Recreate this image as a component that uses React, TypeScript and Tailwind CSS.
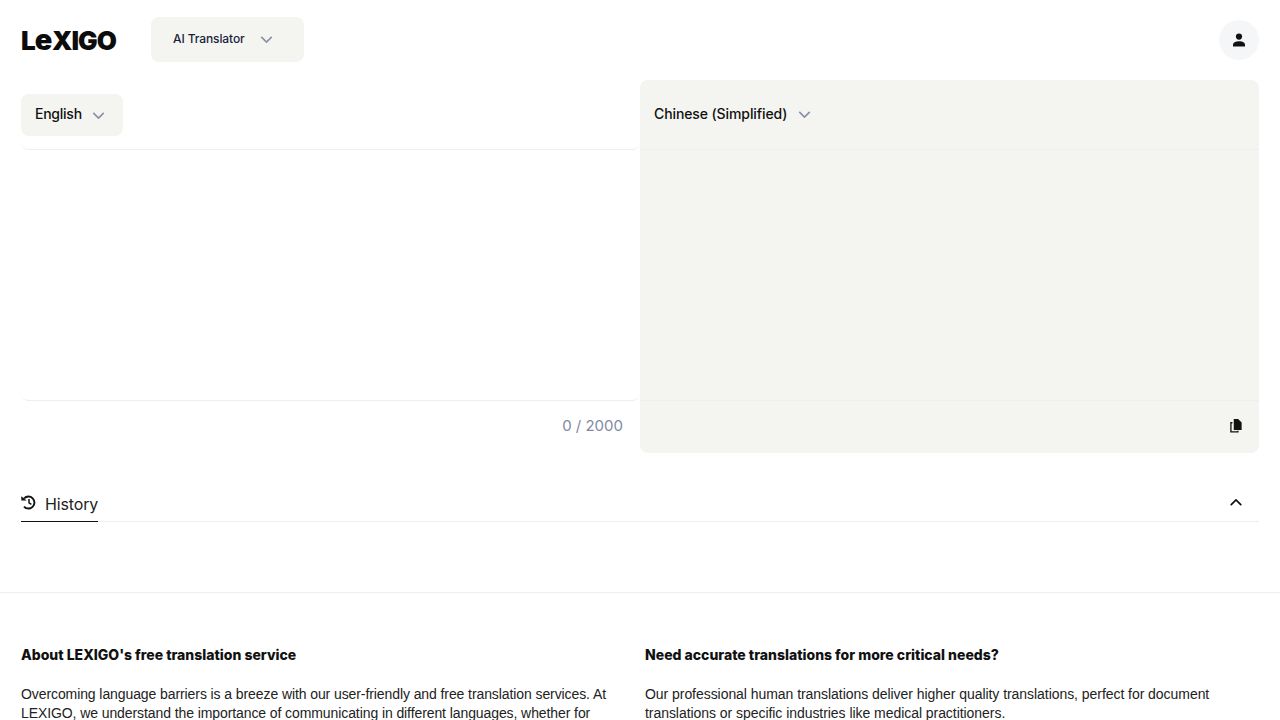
const Chevron = ({ className }: { className: string }) => (
  <svg viewBox="0 0 14 8" fill="none" stroke="currentColor" strokeWidth="1.9" className={className}>
    <path d="M1 1l6 6 6-6" />
  </svg>
);

const App = () => {
  return (
    <div className="h-[720px] overflow-hidden bg-white text-[#111] font-['Inter',sans-serif]">
      <header className="flex h-[80px] items-center justify-between px-[21px] pb-[1px]">
        <div className="flex items-center gap-[35px]">
          <span className="flex w-[95px] items-baseline text-[26px] leading-none font-black tracking-[-0.9px] text-[#0c0c0c]">
            L<span className="text-[29px] tracking-[-0.5px]">e</span>XIGO
          </span>
          <button className="flex h-[45px] w-[153px] items-center rounded-lg bg-[#f4f5f0] pl-[22px] text-[12px] font-medium tracking-[-0.1px] text-[#1a1f3d]">
            <span className="-mt-[2px]">AI Translator</span>
            <Chevron className="ml-[15px] h-[7px] w-[13px] text-[#8b90a8]" />
          </button>
        </div>
        <div className="flex h-10 w-10 items-center justify-center rounded-full bg-[#f5f6f7]">
          <svg viewBox="0 0 14 14" className="h-[14px] w-[14px]" fill="#111">
            <circle cx="7" cy="3.6" r="3.1" />
            <path d="M1 13.5v-1.7c0-2.4 2.3-3.6 6-3.6s6 1.2 6 3.6v1.7z" />
          </svg>
        </div>
      </header>

      <section className="flex pl-[21px] pr-[21px]">
        <div className="flex h-[373px] w-[619px] flex-col rounded-lg">
          <div className="flex h-[70px] items-center rounded-lg border-b border-[#eceef0] pt-[1px]">
            <button className="flex h-[42px] w-[102px] items-center rounded-lg bg-[#f4f5f0] pl-[14px] text-[14px] font-medium tracking-[-0.25px] text-[#111]">
              <span className="-mt-[3px]">English</span>
              <Chevron className="ml-[10px] h-[7px] w-[13px] text-[#8b90a8]" />
            </button>
          </div>
          <div className="h-[251px] rounded-lg border-b border-[#eceef0]" />
          <div className="flex flex-1 items-center justify-end pr-[17px] pb-[1px] text-[15px] text-[#8389a5]">
            0 / 2000
          </div>
        </div>
        <div className="flex h-[373px] w-[619px] flex-col rounded-lg bg-[#f4f5f0]">
          <div className="flex h-[70px] items-center border-b border-[#eceef0] pl-[14px] text-[14px] font-medium tracking-[-0.1px] text-[#111]">
            <span className="-mt-[3px]">Chinese (Simplified)</span>
            <Chevron className="ml-[11px] h-[7px] w-[13px] text-[#8b90a8]" />
          </div>
          <div className="h-[251px] border-b border-[#eceef0]" />
          <div className="flex flex-1 items-center justify-end pr-[17px] pb-[2px]">
            <svg viewBox="0 0 14 16" className="h-[14px] w-[13px]" fill="#111">
              <path d="M5 0h5l4 4v8.5H5z" />
              <path d="M1 3.5h2.5V5H2.5v9H9v-0.5h1.5V15.5H1z" />
            </svg>
          </div>
        </div>
      </section>

      <section className="mx-[21px] mt-[36px] flex h-[33px] items-stretch justify-between border-b border-[#eceef0]">
        <div className="-mb-[1px] flex w-[77px] items-center gap-[9px] border-b border-[#111] text-[16px] tracking-[-0.15px] text-[#222]">
          <svg viewBox="0 0 15 15" fill="none" stroke="#111" className="mb-[5px] h-[15px] w-[15px] shrink-0">
            <path strokeWidth="1.9" d="M3.1 3.4A6 6 0 1 1 3 11.6" />
            <path fill="#111" stroke="none" d="M0.3 1.2L5.6 5.5H0.3z" />
            <path strokeWidth="1.5" d="M8 4v3.8l2.4 1.5" />
          </svg>
          <span className="-mt-[2px]">History</span>
        </div>
        <Chevron className="mt-[10px] mr-[16px] h-[7px] w-[14px] rotate-180 text-[#111]" />
      </section>

      <section className="mt-[70px] grid grid-cols-2 border-t border-[#eceef0] px-[21px] pt-[52px]">
        <div className="pr-[20px]">
          <h2 className="text-[14px] leading-[19px] font-extrabold text-[#111]">
            About LEXIGO's free translation service
          </h2>
          <p className="mt-[21px] font-['Liberation_Sans',sans-serif] text-[14px] leading-[19px] tracking-[-0.09px] text-[#222]">
            Overcoming language barriers is a breeze with our user-friendly and free translation services. At
            LEXIGO, we understand the importance of communicating in different languages, whether for
          </p>
        </div>
        <div className="pl-[5px]">
          <h2 className="text-[14px] leading-[19px] font-extrabold text-[#111]">
            Need accurate translations for more critical needs?
          </h2>
          <p className="mt-[21px] font-['Liberation_Sans',sans-serif] text-[14px] leading-[19px] tracking-[-0.05px] text-[#222]">
            Our professional human translations deliver higher quality translations, perfect for document
            translations or specific industries like medical practitioners.
          </p>
        </div>
      </section>
    </div>
  );
};

export default App;
